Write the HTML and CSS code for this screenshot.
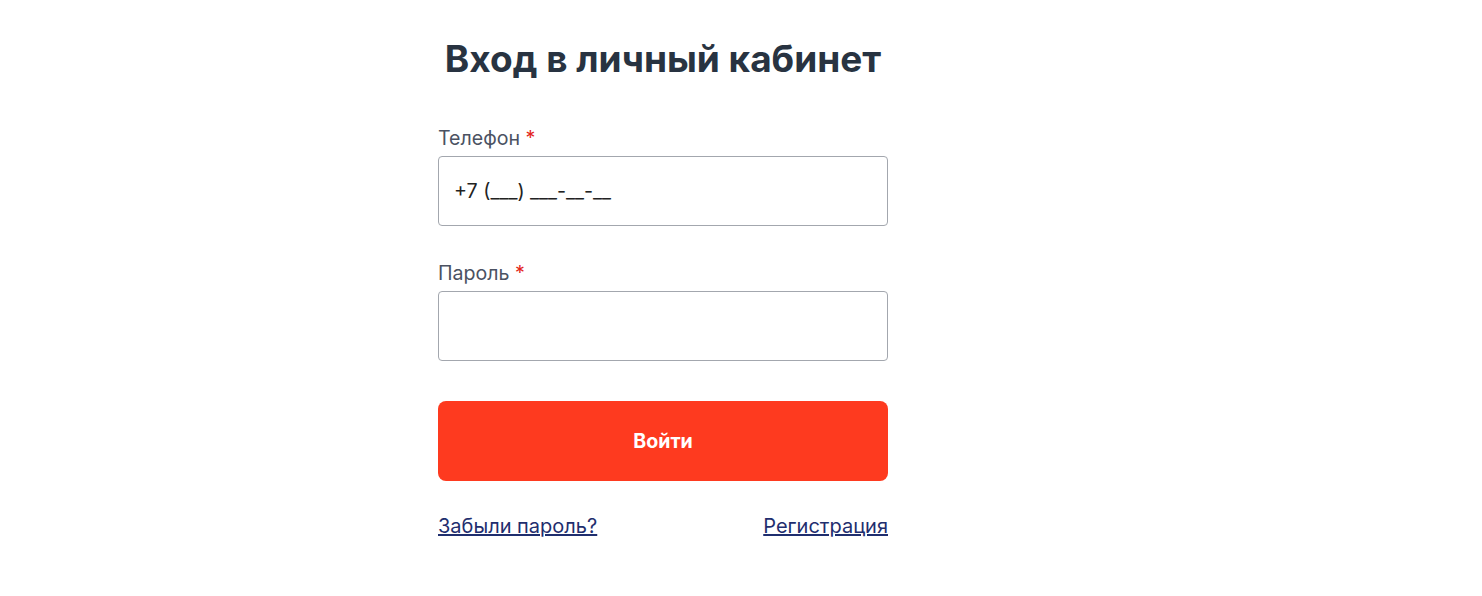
FILE: index.html
```html
<!DOCTYPE html>
<html lang="ru">
<head>
<meta charset="utf-8">
<link rel="stylesheet" href="styles.css">
</head>
<body>
<main class="page">
  <form class="login">
    <h1 class="title">Вход в личный кабинет</h1>
    <label class="field">
      <span class="label">Телефон <span class="req">*</span></span>
      <input class="input" type="text" value="+7 (___) ___-__-__">
    </label>
    <label class="field">
      <span class="label">Пароль <span class="req">*</span></span>
      <input class="input" type="password">
    </label>
    <button class="submit" type="button">Войти</button>
    <div class="links">
      <a href="#" class="link">Забыли пароль?</a>
      <a href="#" class="link">Регистрация</a>
    </div>
  </form>
</main>
</body>
</html>
```
FILE: styles.css
```css
html, body {
  margin: 0;
  padding: 0;
  background: #fff;
}
body {
  font-family: Inter, "Noto Sans", sans-serif;
}
.page {
  padding-left: 438px;
  padding-top: 35px;
}
.login {
  width: 450px;
  display: flex;
  flex-direction: column;
}
.title {
  margin: 0 0 44px;
  font-size: 37px;
  font-weight: 700;
  line-height: 48px;
  color: #283341;
  text-align: center;
}
.field {
  display: flex;
  flex-direction: column;
  gap: 7px;
  margin-bottom: 36px;
}
.label {
  font-size: 19.6px;
  line-height: 22px;
  color: #4b5262;
}
.req {
  color: #e3261d;
}
.input {
  box-sizing: border-box;
  height: 70px;
  width: 100%;
  border: 1px solid #a3a7ae;
  border-radius: 4px;
  padding: 0 15px;
  font-family: Inter, sans-serif;
  font-size: 19.7px;
  color: #222;
  outline: none;
  background: #fff;
}
.submit {
  margin-top: 4px;
  height: 80px;
  border: none;
  border-radius: 8px;
  background: #fe3a1f;
  color: #fff;
  font-family: Inter, sans-serif;
  font-size: 19.6px;
  font-weight: 700;
}
.links {
  display: flex;
  justify-content: space-between;
  margin-top: 33px;
}
.link {
  font-size: 20px;
  line-height: 24px;
  color: #1f2e6e;
  text-decoration: underline;
}
```
